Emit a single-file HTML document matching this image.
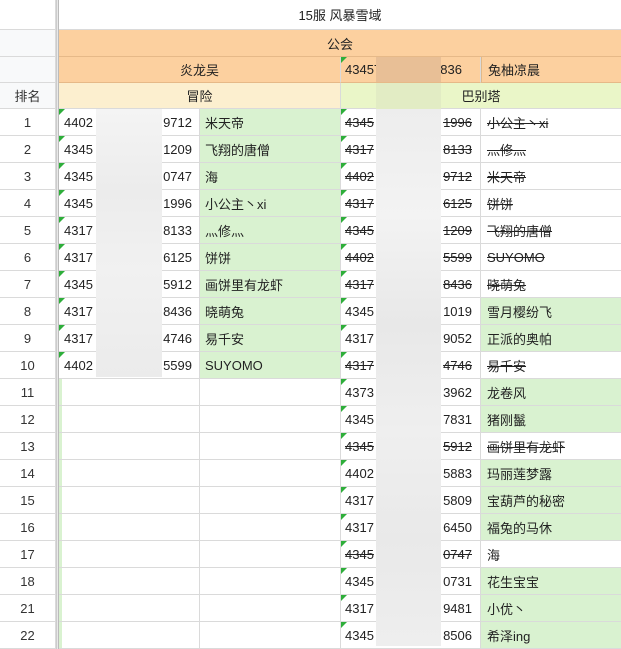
<!DOCTYPE html>
<html><head><meta charset="utf-8"><style>
*{margin:0;padding:0;box-sizing:border-box}
body{width:621px;height:648px;overflow:hidden;background:#fff;font-family:"Liberation Sans","Noto Sans CJK SC",sans-serif;font-size:13px;color:#222;position:relative}
.r{position:absolute;left:0;width:621px;display:flex}
.c{height:100%;border-right:1px solid #dadada;border-bottom:1px solid #dadada;display:flex;align-items:center;white-space:nowrap;overflow:hidden;position:relative}
.n{width:56px;justify-content:center;background:#fff;color:#333}
.sep{width:3px;border-right:1px solid #bbb;border-left:1px solid #ccc;background:#e8e8e8;height:100%}
.a{width:141px;padding-left:5px}
.b{width:141px;padding-left:5px}
.cc{width:140px;padding-left:4px}
.d{width:140px;padding-left:6px;border-right:none}
.g{background:#d9f2d0}
.s{text-decoration:line-through}
.t::before{content:"";position:absolute;left:0;top:0;border-top:6px solid #2eae3a;border-right:6px solid transparent}
.gl{box-shadow:inset 3px 0 0 #d9f2d0}
.mos{position:absolute}
.cc span{margin-left:auto;padding-right:8px}
.a span{margin-left:auto;padding-right:7px}
</style></head><body>
<div class="r" style="top:0;height:30px"><div class="c n" style="background:#fff"></div><div class="sep"></div><div class="c" style="width:562px;justify-content:center;border-right:none">15服 风暴雪域</div></div>
<div class="r" style="top:30px;height:27px"><div class="c n" style="background:#f8f9fa"></div><div class="sep"></div><div class="c" style="width:562px;justify-content:center;background:#fcd09f;border-right:none;border-bottom-color:#e6b988">公会</div></div>
<div class="r" style="top:57px;height:26px"><div class="c n" style="background:#f8f9fa"></div><div class="sep"></div><div class="c" style="width:282px;justify-content:center;background:#fcd09f;border-bottom-color:#e6b988">炎龙吴</div><div class="c cc t" style="background:#fcd09f;border-bottom-color:#e6b988">43457<span style="padding-right:18px">836</span></div><div class="c d" style="background:#fcd09f;border-bottom-color:#e6b988;border-left:1px solid #e0b888">兔柚凉晨</div></div>
<div class="r" style="top:83px;height:26px"><div class="c n" style="background:#f8f9fa">排名</div><div class="sep"></div><div class="c" style="width:282px;justify-content:center;background:#fcefcf">冒险</div><div class="c" style="width:280px;justify-content:center;background:#eaf6c8;border-right:none">巴别塔</div></div>

<div class="r" style="top:109px;height:27px"><div class="c n">1</div><div class="sep"></div><div class="c a t">4402<span>9712</span></div><div class="c b g">米天帝</div><div class="c cc t s">4345<span>1996</span></div><div class="c d s">小公主丶xi</div></div>
<div class="r" style="top:136px;height:27px"><div class="c n">2</div><div class="sep"></div><div class="c a t">4345<span>1209</span></div><div class="c b g">飞翔的唐僧</div><div class="c cc t s">4317<span>8133</span></div><div class="c d s">灬修灬</div></div>
<div class="r" style="top:163px;height:27px"><div class="c n">3</div><div class="sep"></div><div class="c a t">4345<span>0747</span></div><div class="c b g">海</div><div class="c cc t s">4402<span>9712</span></div><div class="c d s">米天帝</div></div>
<div class="r" style="top:190px;height:27px"><div class="c n">4</div><div class="sep"></div><div class="c a t">4345<span>1996</span></div><div class="c b g">小公主丶xi</div><div class="c cc t s">4317<span>6125</span></div><div class="c d s">饼饼</div></div>
<div class="r" style="top:217px;height:27px"><div class="c n">5</div><div class="sep"></div><div class="c a t">4317<span>8133</span></div><div class="c b g">灬修灬</div><div class="c cc t s">4345<span>1209</span></div><div class="c d s">飞翔的唐僧</div></div>
<div class="r" style="top:244px;height:27px"><div class="c n">6</div><div class="sep"></div><div class="c a t">4317<span>6125</span></div><div class="c b g">饼饼</div><div class="c cc t s">4402<span>5599</span></div><div class="c d s">SUYOMO</div></div>
<div class="r" style="top:271px;height:27px"><div class="c n">7</div><div class="sep"></div><div class="c a t">4345<span>5912</span></div><div class="c b g">画饼里有龙虾</div><div class="c cc t s">4317<span>8436</span></div><div class="c d s">晓萌兔</div></div>
<div class="r" style="top:298px;height:27px"><div class="c n">8</div><div class="sep"></div><div class="c a t">4317<span>8436</span></div><div class="c b g">晓萌兔</div><div class="c cc t">4345<span>1019</span></div><div class="c d g">雪月樱纷飞</div></div>
<div class="r" style="top:325px;height:27px"><div class="c n">9</div><div class="sep"></div><div class="c a t">4317<span>4746</span></div><div class="c b g">易千安</div><div class="c cc t">4317<span>9052</span></div><div class="c d g">正派的奥帕</div></div>
<div class="r" style="top:352px;height:27px"><div class="c n">10</div><div class="sep"></div><div class="c a t">4402<span>5599</span></div><div class="c b g">SUYOMO</div><div class="c cc t s">4317<span>4746</span></div><div class="c d s">易千安</div></div>
<div class="r" style="top:379px;height:27px"><div class="c n">11</div><div class="sep"></div><div class="c a gl"></div><div class="c b"></div><div class="c cc t">4373<span>3962</span></div><div class="c d g">龙卷风</div></div>
<div class="r" style="top:406px;height:27px"><div class="c n">12</div><div class="sep"></div><div class="c a gl"></div><div class="c b"></div><div class="c cc t">4345<span>7831</span></div><div class="c d g">猪刚鬣</div></div>
<div class="r" style="top:433px;height:27px"><div class="c n">13</div><div class="sep"></div><div class="c a gl"></div><div class="c b"></div><div class="c cc t s">4345<span>5912</span></div><div class="c d s">画饼里有龙虾</div></div>
<div class="r" style="top:460px;height:27px"><div class="c n">14</div><div class="sep"></div><div class="c a gl"></div><div class="c b"></div><div class="c cc t">4402<span>5883</span></div><div class="c d g">玛丽莲梦露</div></div>
<div class="r" style="top:487px;height:27px"><div class="c n">15</div><div class="sep"></div><div class="c a gl"></div><div class="c b"></div><div class="c cc t">4317<span>5809</span></div><div class="c d g">宝葫芦的秘密</div></div>
<div class="r" style="top:514px;height:27px"><div class="c n">16</div><div class="sep"></div><div class="c a gl"></div><div class="c b"></div><div class="c cc t">4317<span>6450</span></div><div class="c d g">福兔的马休</div></div>
<div class="r" style="top:541px;height:27px"><div class="c n">17</div><div class="sep"></div><div class="c a gl"></div><div class="c b"></div><div class="c cc t s">4345<span>0747</span></div><div class="c d">海</div></div>
<div class="r" style="top:568px;height:27px"><div class="c n">18</div><div class="sep"></div><div class="c a gl"></div><div class="c b"></div><div class="c cc t">4345<span>0731</span></div><div class="c d g">花生宝宝</div></div>
<div class="r" style="top:595px;height:27px"><div class="c n">21</div><div class="sep"></div><div class="c a gl"></div><div class="c b"></div><div class="c cc t">4317<span>9481</span></div><div class="c d g">小优丶</div></div>
<div class="r" style="top:622px;height:27px"><div class="c n">22</div><div class="sep"></div><div class="c a gl"></div><div class="c b"></div><div class="c cc t">4345<span>8506</span></div><div class="c d g">希泽ing</div></div>

<div class="mos" style="left:376px;top:57px;width:65px;height:25px;background:#e8bf96"></div>
<div class="mos" style="left:376px;top:83px;width:65px;height:26px;background:#e2ecc4"></div>
<div class="mos" style="left:376px;top:109px;width:65px;height:537px;background:linear-gradient(#ededed,#f3f3f3 20%,#e8e8e8 40%,#efefef 60%,#e9e9e9 80%,#eeeeee)"></div>
<div class="mos" style="left:96px;top:109px;width:66px;height:268px;background:linear-gradient(#f4f4f4,#ececec 30%,#f1f1f1 60%,#ebebeb)"></div>
</body></html>
